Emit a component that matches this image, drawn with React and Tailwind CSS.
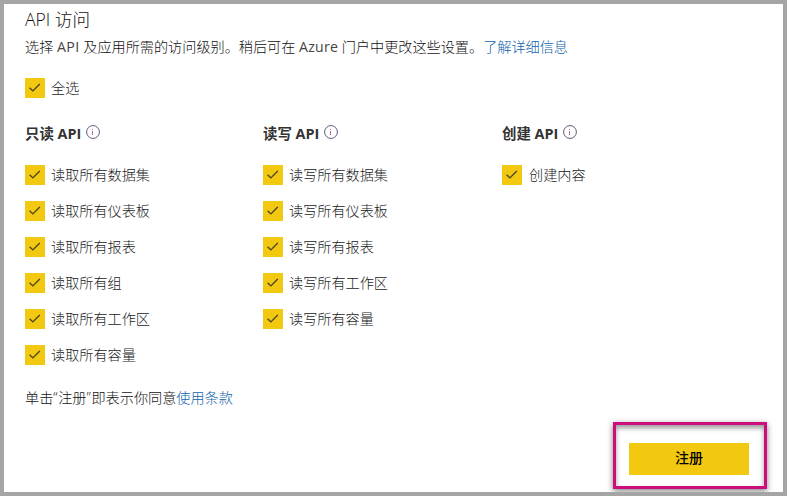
const columns = [
  {
    title: '只读 API',
    width: 'w-[238px]',
    items: ['读取所有数据集', '读取所有仪表板', '读取所有报表', '读取所有组', '读取所有工作区', '读取所有容量'],
  },
  {
    title: '读写 API',
    width: 'w-[239px]',
    items: ['读写所有数据集', '读写所有仪表板', '读写所有报表', '读写所有工作区', '读写所有容量'],
  },
  { title: '创建 API', width: 'w-[200px]', items: ['创建内容'] },
];

function Check({ label, gap = 'gap-1.5' }) {
  return (
    <label className={`flex h-5 items-center ${gap}`}>
      <span className="flex size-5 shrink-0 items-center justify-center bg-[#f2c811]">
        <svg viewBox="0 0 20 20" className="size-5" fill="none" stroke="#4b4526" strokeWidth="1.4">
          <path d="M4.6 9.8l3.3 3.1 6.9-6.8" />
        </svg>
      </span>
      <span className="text-[14.15px] text-[#222]">{label}</span>
    </label>
  );
}

function Info() {
  return (
    <svg viewBox="0 0 14 14" className="mb-[5px] size-3.5" fill="none">
      <circle cx="7" cy="7" r="6.4" stroke="#5d5a78" strokeWidth="1" />
      <path d="M6.5 6v4M6.5 4v1" stroke="#b06a9c" strokeWidth="1" />
    </svg>
  );
}

export default function App() {
  return (
    <main className="flex h-[496px] w-[787px] flex-col overflow-hidden border-4 border-[#a5a5a5] bg-white pl-[21px] font-['Open_Sans','Noto_Sans_CJK_SC',sans-serif] text-[14.15px] leading-5 font-light whitespace-nowrap text-[#111]">
      <h1 className="mt-[3px] h-[25px] text-[17.6px] leading-6">API 访问</h1>
      <p className="mt-[5px] h-5">
        选择 <span className="font-normal tracking-[0.4px] text-[#444]">API</span> 及应用所需的访问级别。稍后可在{' '}
        <span className="font-normal tracking-[0.2px] text-[#444]">Azure</span> 门户中更改这些设置。
        <a className="text-[#0f62ab]">了解详细信息</a>
      </p>
      <div className="mt-[21px]">
        <Check label="全选" />
      </div>
      <div className="mt-[26px] flex h-[241px]">
        {columns.map((column) => (
          <section key={column.title} className={column.width}>
            <h2 className="flex h-5 items-center gap-[5px] text-[14.4px] font-bold text-[#333]">
              {column.title}
              <Info />
            </h2>
            <div className="mt-[21px] flex flex-col gap-4">
              {column.items.map((item) => (
                <Check key={item} label={item} gap={column.items.length === 1 ? 'gap-[7px]' : 'gap-1.5'} />
              ))}
            </div>
          </section>
        ))}
      </div>
      <p className="mt-[23px] h-5">
        单击<span className="tracking-[0.7px]">“</span>注册<span className="tracking-[0.7px]">”</span>即表示你同意
        <a className="text-[#0f62ab]">使用条款</a>
      </p>
      <div className="mt-[14px] ml-[588px] flex h-[67px] w-[154px] shrink-0 items-start border-3 border-[#cc0e7d] pt-[18px] pl-[13px] shadow-[0_2px_6px_rgba(0,0,0,0.5),inset_0_3px_5px_rgba(0,0,0,0.4)]">
        <button className="h-8 w-[120px] bg-[#f2c811] pb-0.5 text-[14px] font-medium text-black">注册</button>
      </div>
    </main>
  );
}
